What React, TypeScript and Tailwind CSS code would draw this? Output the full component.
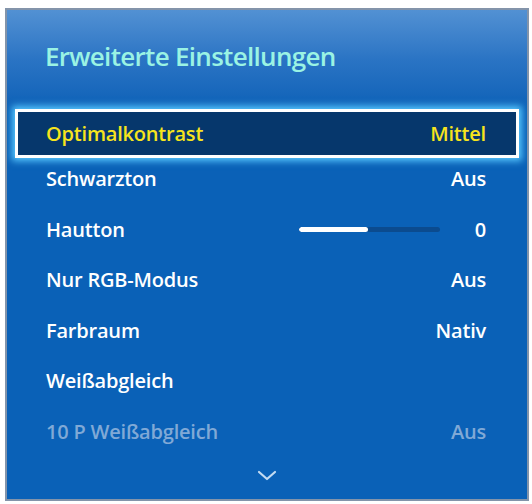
import React from "react";

const rows: { label: string; value?: string; slider?: boolean; disabled?: boolean }[] = [
  { label: "Schwarzton", value: "Aus" },
  { label: "Hautton", value: "0", slider: true },
  { label: "Nur RGB-Modus", value: "Aus" },
  { label: "Farbraum", value: "Nativ" },
  { label: "Weißabgleich" },
  { label: "10 P Weißabgleich", value: "Aus", disabled: true },
];

export default function App() {
  return (
    <div
      className="w-[532px] h-[504px] bg-white pt-[8px] pl-[5px]"
      style={{ fontFamily: '"Open Sans", "Noto Sans", sans-serif' }}
    >
      <div className="w-[524px] h-[493px] border-2 border-[#8394aa] bg-[#0a61b7] flex flex-col overflow-hidden">
        <div className="h-[99px] shrink-0 bg-gradient-to-b from-[#5291d3] via-[#2a74c4] to-[#0b61b7] pl-[38px] pt-[29px]">
          <div className="text-[26px] leading-[35px] font-semibold text-[#9af3e4] tracking-[-0.7px]">
            Erweiterte Einstellungen
          </div>
        </div>
        <div className="mx-[8px] h-[49px] shrink-0 border-[3px] border-white bg-[#06376c] shadow-[0_0_7px_3px_#58c8ff] flex items-center justify-between pl-[28px] pr-[30px] relative z-10">
          <span className="text-[20px] font-semibold text-[#f6e41d] tracking-[-0.2px]">Optimalkontrast</span>
          <span className="text-[20px] font-semibold text-[#f6e41d] tracking-[-0.2px]">Mittel</span>
        </div>
        <div className="mt-[-4px] flex flex-col">
          {rows.map((r) => (
            <div
              key={r.label}
              className={`h-[50.5px] flex items-center justify-between pl-[39px] pr-[41px] text-[20px] font-semibold tracking-[-0.2px] ${
                r.disabled ? "text-[#80a9d6]" : "text-white"
              }`}
            >
              <span>{r.label}</span>
              <div className="flex items-center">
                {r.slider && (
                  <div className="w-[141px] h-[5px] rounded-full bg-[#0b4b8f] mr-[35px] overflow-hidden">
                    <div className="h-full rounded-full bg-white" style={{ width: "49%" }} />
                  </div>
                )}
                {r.value && <span>{r.value}</span>}
              </div>
            </div>
          ))}
        </div>
        <div className="flex justify-center pt-[13px]">
          <svg width="20" height="11" viewBox="0 0 20 11" fill="none">
            <path d="M2 2 L10 9 L18 2" stroke="#c3dbf2" strokeWidth="2.2" strokeLinecap="round" strokeLinejoin="round" />
          </svg>
        </div>
      </div>
    </div>
  );
}
